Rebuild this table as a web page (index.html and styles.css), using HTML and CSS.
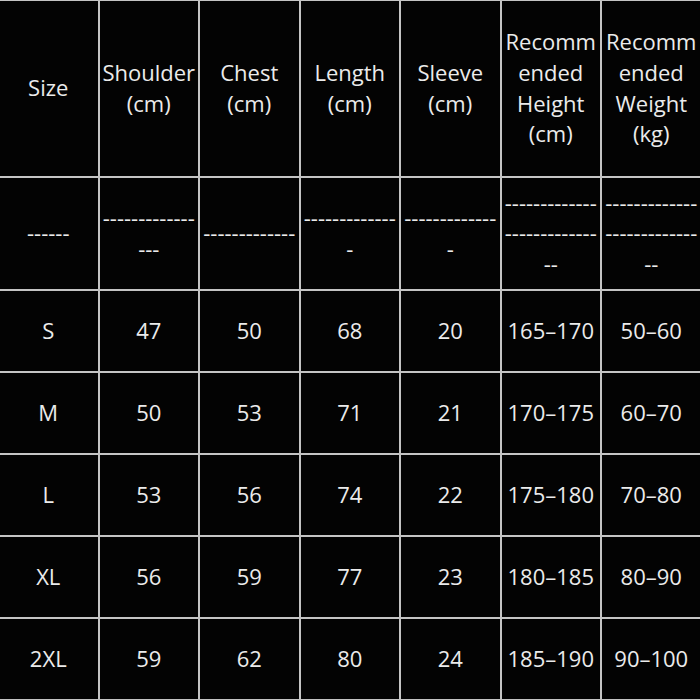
FILE: index.html
```html
<!DOCTYPE html>
<html>
<head>
<meta charset="utf-8">
<link rel="stylesheet" href="styles.css">
</head>
<body>
<table class="size-table">
  <colgroup>
    <col class="col"><col class="col"><col class="col"><col class="col"><col class="col"><col class="col"><col class="col">
  </colgroup>
  <tr class="row-head">
    <td>Size</td>
    <td>Shoulder (cm)</td>
    <td>Chest (cm)</td>
    <td>Length (cm)</td>
    <td>Sleeve (cm)</td>
    <td>Recommended Height (cm)</td>
    <td>Recommended Weight (kg)</td>
  </tr>
  <tr class="row-sep">
    <td>------</td>
    <td>----------------</td>
    <td>-------------</td>
    <td>--------------</td>
    <td>--------------</td>
    <td>----------------------------</td>
    <td>----------------------------</td>
  </tr>
  <tr class="row-data"><td>S</td><td>47</td><td>50</td><td>68</td><td>20</td><td>165–170</td><td>50–60</td></tr>
  <tr class="row-data"><td>M</td><td>50</td><td>53</td><td>71</td><td>21</td><td>170–175</td><td>60–70</td></tr>
  <tr class="row-data"><td>L</td><td>53</td><td>56</td><td>74</td><td>22</td><td>175–180</td><td>70–80</td></tr>
  <tr class="row-data"><td>XL</td><td>56</td><td>59</td><td>77</td><td>23</td><td>180–185</td><td>80–90</td></tr>
  <tr class="row-data"><td>2XL</td><td>59</td><td>62</td><td>80</td><td>24</td><td>185–190</td><td>90–100</td></tr>
</table>
</body>
</html>
```

FILE: styles.css
```css
html, body {
  margin: 0;
  padding: 0;
  background: #030303;
  overflow: hidden;
}
body {
  width: 700px;
  height: 700px;
}
.size-table {
  margin-left: -3px;
  margin-top: -1px;
  width: 704px;
  table-layout: fixed;
  border-collapse: collapse;
  font-family: "Open Sans", "Liberation Sans", sans-serif;
  font-size: 22px;
  line-height: 30.6px;
  color: #ebebeb;
}
.col {
  width: 100.5px;
}
.size-table td {
  border: 2px solid #c4c4c4;
  padding: 0 1px 2px;
  text-align: center;
  vertical-align: middle;
  overflow-wrap: anywhere;
}
.row-head td {
  height: 173px;
}
.row-sep td {
  height: 109px;
}
.row-data td {
  height: 78px;
}
```
